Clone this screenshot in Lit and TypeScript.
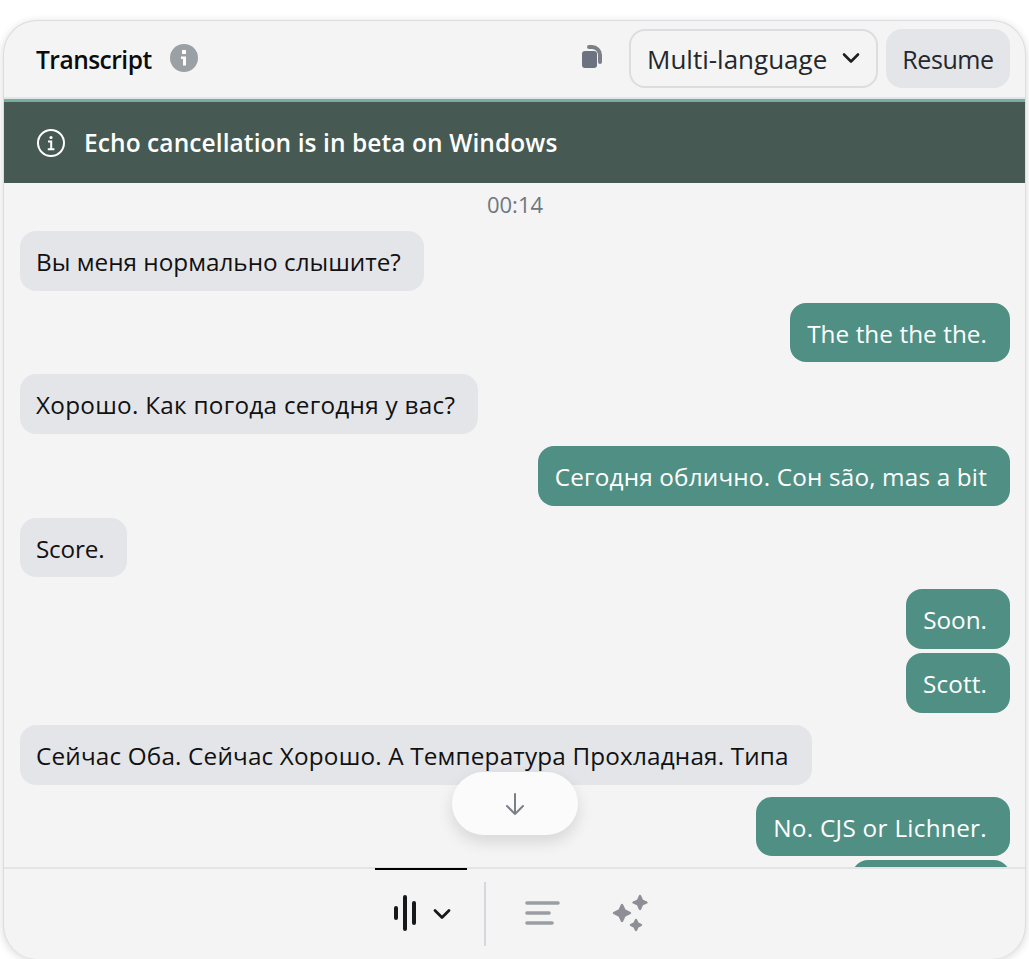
import { LitElement, html, css } from "lit";
import { customElement } from "lit/decorators.js";

type Msg = { t: string; me?: boolean; tight?: boolean; ls?: number; w?: number };
const msgs: Msg[] = [
  { t: "Вы меня нормально слышите?", ls: 0 },
  { t: "The the the the.", me: true, ls: 0.06 },
  { t: "Хорошо. Как погода сегодня у вас?", ls: 0.27 },
  { t: "Сегодня облично. Сон são, mas a bit", me: true, ls: 0.17 },
  { t: "Score.", ls: -0.2 },
  { t: "Soon.", me: true, ls: 0 },
  { t: "Scott.", me: true, tight: true, ls: 0.1 },
  { t: "Сейчас Оба. Сейчас Хорошо. А Температура Прохладная. Типа", ls: 0.165 },
  { t: "No. CJS or Lichner.", me: true, ls: 0.3 },
  { t: "", me: true, tight: true, w: 158 },
];

@customElement("app-root")
export class AppRoot extends LitElement {
  static styles = css`
    :host { display: block; height: 959px; overflow: hidden; background: #fff; padding: 20px 3px 0 3px; box-sizing: border-box; font-family: "Open Sans", "Noto Sans", sans-serif; }
    .card { position: relative; height: 939px; box-sizing: border-box; background: #f4f4f4; border: 1.5px solid #dcdce1; border-bottom: none; border-radius: 34px; overflow: hidden; display: flex; flex-direction: column; box-shadow: 0 2px 8px rgba(0,0,0,.16); }
    .head { height: 74px; flex: none; display: flex; align-items: center; padding: 0 15px 2px 32px; border-bottom: 2px solid #e3e4e8; box-sizing: content-box; }
    .title { font-size: 24.5px; font-weight: 600; color: #0b0b0c; letter-spacing: -.5px; margin-top: 2px; }
    .info { margin: 0 0 0 18px; width: 28px; height: 28px; display: block; }
    .spacer { flex: 1; }
    .copy { width: 24px; height: 26px; margin: -2px 25px 0 0; display: block; }
    .select { width: 249px; height: 59px; box-sizing: border-box; border: 2px solid #dcdce1; border-radius: 16px; display: flex; align-items: center; justify-content: space-between; padding: 2px 15px 0 16px; font-size: 26px; color: #24272b; }
    .select svg { width: 20px; height: 20px; flex: none; margin-top: -3px; }
    .resume { margin-left: 8px; width: 124px; height: 59px; box-sizing: border-box; padding-top: 2px; border-radius: 16px; background: #e4e5e9; display: flex; align-items: center; justify-content: center; font-size: 25px; letter-spacing: -.4px; color: #24272b; }
    .banner { height: 81px; flex: none; background: #465a53; border-top: 3px solid #74b09d; display: flex; align-items: center; padding-left: 32px; gap: 18px; color: #fff; font-size: 24.5px; font-weight: 600; letter-spacing: .08px; }
    .banner svg { width: 30px; height: 30px; }
    .list { flex: 1; min-height: 0; overflow: hidden; padding: 0 15px 0 16px; display: flex; flex-direction: column; }
    .time { text-align: center; color: #6f7780; font-size: 22px; line-height: 30px; margin: 6px 0 0; flex: none; }
    .b { flex: none; box-sizing: border-box; height: 59.7px; line-height: 59.7px; padding: 1px 23px 0 16px; border-radius: 16px; font-size: 24.3px; white-space: nowrap; margin-top: 12px; align-self: flex-start; background: #e4e5e9; color: #111; }
    .b.me { align-self: flex-end; background: #509084; color: #fff; padding-left: 17px; }
    .b.tight { margin-top: 4px; }
    .down { position: absolute; left: 448px; top: 751px; width: 126px; height: 63px; border-radius: 32px; background: #fbfbfb; box-shadow: 0 7px 16px rgba(0,0,0,.12); display: flex; align-items: center; justify-content: center; }
    .down svg { width: 24px; height: 24px; }
    .foot { height: 92px; flex: none; border-top: 2px solid #e3e4e8; display: flex; position: relative; padding-left: 371px; box-sizing: border-box; }
    .tab { width: 92px; margin-top: -1px; height: 93px; box-sizing: border-box; border-top: 2px solid #000; display: flex; align-items: center; gap: 14.5px; padding: 0 0 6px 18px; }
    .tab svg.w { width: 24px; height: 36px; flex: none; }
    .tab svg.c { width: 20px; height: 20px; flex: none; margin-top: 2px; }
    .div { width: 2px; height: 64px; margin: 13px 0 0 17px; background: #d6d7dc; flex: none; }
    .lines { display: block; width: 36px; height: 26px; margin: 31px 0 0 39px; }
    .spark { display: block; width: 38px; height: 38px; margin: 25px 0 0 50px; }
  `;

  render() {
    return html`<div class="card">
      <div class="head">
        <span class="title">Transcript</span>
        <svg class="info" viewBox="0 0 28 28"><circle cx="14" cy="14" r="14" fill="#9ba0a4"/><rect x="12" y="6" width="4" height="4" fill="#fff"/><path d="M11 12.5h5v9h-3v-6.5h-2z" fill="#fff"/></svg>
        <span class="spacer"></span>
        <svg class="copy" viewBox="0 0 24 26"><rect x="2" y="7" width="15" height="17" rx="3" fill="#6c7280"/><path d="M9 3h3a8 8 0 0 1 8 8v7" fill="none" stroke="#7b7f88" stroke-width="4" stroke-linecap="round"/></svg>
        <div class="select">Multi-language<svg viewBox="0 0 20 20"><path d="M3 6.5l7 7 7-7" fill="none" stroke="#1d1f22" stroke-width="2.6" stroke-linecap="round" stroke-linejoin="round"/></svg></div>
        <div class="resume">Resume</div>
      </div>
      <div class="banner">
        <svg viewBox="0 0 30 30" fill="none"><circle cx="15" cy="15" r="13" stroke="#fff" stroke-width="2"/><circle cx="15" cy="9.5" r="1.6" fill="#fff"/><path d="M12 13.5h3.2v7.5M11.8 21.2h6.6" stroke="#fff" stroke-width="2"/></svg>
        <span>Echo cancellation is in beta on Windows</span>
      </div>
      <div class="list">
        <div class="time">00:14</div>
        ${msgs.map((m) => html`<div class="b ${m.me ? "me" : ""} ${m.tight ? "tight" : ""}" style="letter-spacing:${m.ls ?? 0}px;${m.w ? `width:${m.w}px` : ""}">${m.t}</div>`)}
      </div>
      <div class="foot">
        <div class="tab">
          <svg class="w" viewBox="0 0 24 36"><path d="M3 13v10M12 2v32M21 8v20" stroke="#17181a" stroke-width="4" stroke-linecap="round" fill="none"/></svg>
          <svg class="c" viewBox="0 0 20 20"><path d="M3 6.5l7 7 7-7" fill="none" stroke="#17181a" stroke-width="2.8" stroke-linecap="round" stroke-linejoin="round"/></svg>
        </div>
        <div class="div"></div>
        <svg class="lines" viewBox="0 0 36 26"><path d="M2 3h31M2 13h22M2 23h25" stroke="#9a9ea3" stroke-width="3.6" stroke-linecap="round"/></svg>
        <svg class="spark" viewBox="0 0 38 38" fill="#8e8f96" stroke="#8e8f96" stroke-width="2.4" stroke-linejoin="round"><path d="M11 11l2.6 5.4 5.4 2.6-5.4 2.6L11 27l-2.6-5.4L3 19l5.4-2.6z"/><path d="M29 2l2 4.5 4.5 2-4.5 2-2 4.5-2-4.5-4.5-2 4.5-2z"/><path d="M25 26l1.6 3.4L30 31l-3.4 1.6L25 36l-1.6-3.4L20 31l3.4-1.6z"/></svg>
      </div>
      <div class="down"><svg viewBox="0 0 24 24" fill="none"><path d="M12 2v20M4 14l8 8 8-8" stroke="#7b7f88" stroke-width="2" stroke-linecap="round" stroke-linejoin="round"/></svg></div>
    </div>`;
  }
}
